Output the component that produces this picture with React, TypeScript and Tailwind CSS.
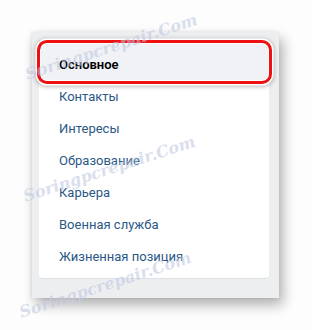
const items = [
  'Основное',
  'Контакты',
  'Интересы',
  'Образование',
  'Карьера',
  'Военная служба',
  'Жизненная позиция',
];

const marks = [
  { left: 26, top: 63 },
  { left: 24, top: 185 },
  { left: 20, top: 301 },
];

export default function App() {
  return (
    <div
      className="relative w-[312px] h-[330px] overflow-hidden bg-[#fdfdfd] pt-[32px] pl-[32px]"
      style={{ fontFamily: 'Roboto, "Open Sans", sans-serif' }}
    >
      {/* Settings menu */}
      <div className="relative w-[247px] h-[266px] bg-[#edeef0] pt-[7px] pl-[7px] shadow-[4px_7px_12px_rgba(0,0,0,0.3),-1px_0_4px_rgba(0,0,0,0.08)]">
        <div className="w-[230px] bg-white rounded-[4px] border-b border-[#dce1e6] pt-[2px] pb-[5px]">
          {items.map((label, i) =>
            i === 0 ? (
              <div
                key={label}
                className="h-[40px] pt-[8px] flex items-center border-l-2 border-[#3f5f88] bg-[#f0f2f5] pl-[18px] text-[13px] font-semibold text-black"
              >
                {label}
              </div>
            ) : (
              <div
                key={label}
                className="h-8 flex items-center pl-5 text-[13px] text-[#2a5885]"
              >
                {label}
              </div>
            )
          )}
        </div>

        {/* Red highlight frame */}
        <div className="absolute left-[5px] top-[8px] w-[235px] h-[44px] rounded-[10px] border-[3px] border-[#ee1111] shadow-[0_0_0_1.5px_#ffffff,inset_0_0_0_1px_#ffffff,0_1px_4px_1.5px_rgba(0,0,0,0.25)] pointer-events-none" />
      </div>

      {/* Watermarks */}
      {marks.map((m) => (
        <span
          key={m.top}
          className="absolute whitespace-nowrap text-[16px] italic font-bold text-[#bcc6e0] opacity-55 origin-left -rotate-[18deg] pointer-events-none [text-shadow:0_0_1px_#fff]"
          style={{ left: m.left, top: m.top, fontFamily: '"DejaVu Serif", serif' }}
        >
          Soringpcrepair.Com
        </span>
      ))}
    </div>
  );
}
